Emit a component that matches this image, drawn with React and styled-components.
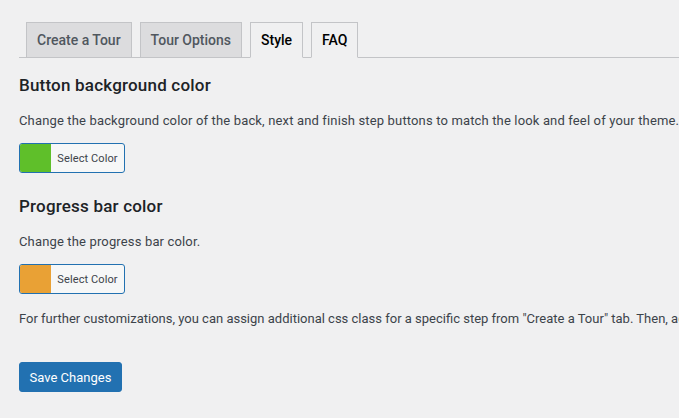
import React from "react";
import styled, { createGlobalStyle } from "styled-components";

//STYLES
const GlobalStyle = createGlobalStyle`
  html, body {
    margin: 0;
    padding: 0;
    background: #f0f0f1;
  }
  body {
    font-family: Roboto, "Noto Sans", sans-serif;
    color: #3c434a;
    overflow: hidden;
  }
`;

const Page = styled.div`
  padding: 23px 0 0 19px;
  width: 679px;
  height: 418px;
  box-sizing: border-box;
  overflow: hidden;
`;

const TabBar = styled.nav`
  display: flex;
  align-items: flex-end;
  gap: 8px;
  padding-left: 7px;
  border-bottom: 1px solid #c3c4c7;
  height: 35px;
  box-sizing: border-box;
`;

const Tab = styled.a`
  display: block;
  box-sizing: border-box;
  height: 36px;
  margin-bottom: -1px;
  padding: 5px 10px;
  font-size: 14px;
  line-height: 24px;
  font-weight: 500;
  text-decoration: none;
  white-space: nowrap;
  border: 1px solid #c3c4c7;
  border-bottom-color: ${(p) => (p.$active ? "#f0f0f1" : "#c3c4c7")};
  background: ${(p) => (p.$active ? "#f0f0f1" : "#dcdcde")};
  color: ${(p) => (p.$active ? "#000" : "#50575e")};
`;

const Heading = styled.h2`
  margin: ${(p) => p.$top}px 0 0;
  font-size: 17px;
  line-height: 24px;
  font-weight: 500;
  letter-spacing: 0.2px;
  color: #1d2327;
`;

const Text = styled.p`
  margin: ${(p) => p.$top}px 0 0;
  font-size: 13px;
  line-height: 20px;
  letter-spacing: ${(p) => (p.$tight ? "0" : "0.15px")};
  white-space: nowrap;
`;

const ColorButton = styled.button`
  display: flex;
  align-items: stretch;
  margin-top: 12px;
  padding: 0;
  width: 106px;
  height: 30px;
  border: 1px solid #2271b1;
  border-radius: 3px;
  overflow: hidden;
  background: #f6f7f7;
  cursor: pointer;
  font-family: inherit;
`;

const Swatch = styled.span`
  width: 31px;
  flex: none;
  background: ${(p) => p.$color};
`;

const SwatchLabel = styled.span`
  flex: 1;
  display: flex;
  align-items: center;
  justify-content: center;
  font-size: 11px;
  letter-spacing: 0.1px;
  color: #3c434a;
  white-space: nowrap;
`;

const SaveButton = styled.button`
  display: block;
  margin-top: 33px;
  width: 103px;
  height: 30px;
  padding: 0;
  border: 1px solid #2271b1;
  border-radius: 3px;
  background: #2271b1;
  color: #fff;
  font-family: inherit;
  font-size: 13px;
  white-space: nowrap;
  cursor: pointer;
`;

const ColorPicker = ({ color }) => (
  <ColorButton type="button">
    <Swatch $color={color} />
    <SwatchLabel>Select Color</SwatchLabel>
  </ColorButton>
);

const App = () => {
  return (
    <>
      <GlobalStyle />
      <Page>
        <TabBar>
          <Tab href="#">Create a Tour</Tab>
          <Tab href="#">Tour Options</Tab>
          <Tab href="#" $active>
            Style
          </Tab>
          <Tab href="#" $active>
            FAQ
          </Tab>
        </TabBar>

        <Heading $top={15}>Button background color</Heading>
        <Text $top={14}>
          Change the background color of the back, next and finish step buttons to match the look and feel of your theme.
        </Text>
        <ColorPicker color="#5fbf2a" />

        <Heading $top={21}>Progress bar color</Heading>
        <Text $top={14}>Change the progress bar color.</Text>
        <ColorPicker color="#e9a135" />

        <Text $top={15} $tight>
          For further customizations, you can assign additional css class for a specific step from "Create a Tour" tab. Then, add your own CSS rules.
        </Text>

        <SaveButton type="button">Save Changes</SaveButton>
      </Page>
    </>
  );
};

export default App;
